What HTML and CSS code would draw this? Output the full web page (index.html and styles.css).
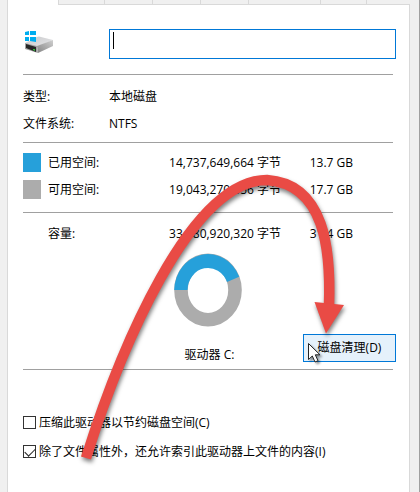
FILE: index.html
```html
<!DOCTYPE html>
<html lang="zh-CN">
<head>
    <meta charset="UTF-8">
    <meta name="viewport" content="width=device-width, initial-scale=1.0">
    <title>驱动器 C:</title>
    <link rel="stylesheet" href="styles.css">
</head>
<body>
    <div class="dialog">
        <div class="tabs">
            <span class="tab selected"></span>
            <span class="tab"></span>
            <span class="tab wide"></span>
            <span class="tab wide"></span>
            <span class="tab wide"></span>
            <span class="tab widest"></span>
            <span class="tab"></span>
            <span class="tab rest"></span>
        </div>

        <main class="panel">
            <div class="drive-name">
                <svg class="drive-icon" width="32" height="24" viewBox="0 0 32 24">
                    <defs>
                        <linearGradient id="driveTop" x1="0" y1="0" x2="1" y2="1">
                            <stop offset="0" stop-color="#c9cacc"/>
                            <stop offset="1" stop-color="#e6e6e8"/>
                        </linearGradient>
                        <linearGradient id="driveSide" x1="0" y1="1" x2="1" y2="0">
                            <stop offset="0" stop-color="#858585"/>
                            <stop offset="1" stop-color="#cfcfcf"/>
                        </linearGradient>
                    </defs>
                    <path d="M2 14 L14 8 Q16 7 18 8 L30 11 L14 18 Z" fill="url(#driveTop)"/>
                    <path d="M14 17 L30 11 L30 17 L15 24 Z" fill="url(#driveSide)"/>
                    <path d="M2 14 L14 17 L15 24 L2 20 Z" fill="#a2a2a2"/>
                    <path d="M3 15 L13 18 L13 23 L3 19 Z" fill="#262626"/>
                    <path d="M10 20 L12 20 L12 22 L10 21 Z" fill="#2fc238"/>
                    <path d="M2 3 L6 2 V6 H2 Z M7 2 L13 2 V6 H7 Z M2 8 H6 V12 L2 12 Z M7 8 H13 V13 L7 12 Z" fill="#00adef"/>
                </svg>
                <input type="text" class="name-input" id="volumeName" aria-labelledby="driveLabel" autofocus>
                <span class="caret"></span>
            </div>
            <hr>

            <table class="details">
                <tr>
                    <th scope="row">类型:</th>
                    <td>本地磁盘</td>
                </tr>
                <tr>
                    <th scope="row">文件系统:</th>
                    <td>NTFS</td>
                </tr>
            </table>
            <hr>

            <table class="space usage">
                <tr>
                    <td class="key"><span class="swatch used"></span></td>
                    <th scope="row">已用空间:</th>
                    <td class="bytes">14,737,649,664 字节</td>
                    <td class="size">13.7 GB</td>
                </tr>
                <tr>
                    <td class="key"><span class="swatch free"></span></td>
                    <th scope="row">可用空间:</th>
                    <td class="bytes">19,043,270,656 字节</td>
                    <td class="size">17.7 GB</td>
                </tr>
            </table>
            <hr>

            <table class="space capacity">
                <tr>
                    <td class="key"></td>
                    <th scope="row">容量:</th>
                    <td class="bytes">33,780,920,320 字节</td>
                    <td class="size">31.4 GB</td>
                </tr>
            </table>

            <div class="chart">
                <svg width="68" height="74" viewBox="0 0 68 74">
                    <ellipse cx="34" cy="37" rx="27" ry="29.7" fill="none" stroke="#acacac" stroke-width="13.6"/>
                    <path d="M0.2 37 A33.8 36.8 0 0 1 65.2 23.8 L53 29 A20.5 22.5 0 0 0 13.5 37 Z" fill="#26a0da"/>
                </svg>
            </div>

            <div class="drive-row">
                <span class="drive-label" id="driveLabel">驱动器 C:</span>
                <button type="button" class="cleanup">磁盘清理(D)</button>
            </div>
            <hr>

            <div class="options">
                <label class="option">
                    <input type="checkbox">
                    <span>压缩此驱动器以节约磁盘空间(C)</span>
                </label>
                <label class="option">
                    <input type="checkbox" checked>
                    <span>除了文件属性外，还允许索引此驱动器上文件的内容(I)</span>
                </label>
            </div>
        </main>

        <!-- Arrow pointing at the cleanup button, and the mouse pointer -->
        <svg class="pointer-overlay" width="420" height="492" viewBox="0 0 420 492">
            <g class="arrow">
                <path d="M86 458 C120 350 190 180 267 180 C325 184 331 250 329 306" fill="none" stroke="#e94b45" stroke-width="10.5"/>
                <path d="M314.5 302 L344 305 L326 333.5 Z" fill="#e94b45"/>
            </g>
            <path class="cursor" d="M308.5 343.5 V359.5 L312.3 356 L315 362 L318 360.7 L315.3 354.8 H320 Z" fill="#fff" stroke="#222" stroke-width="1"/>
        </svg>
    </div>
</body>
</html>
```
FILE: styles.css
```css
* {
    box-sizing: border-box;
}

body {
    margin: 0;
    font-family: "Open Sans", "Noto Sans CJK SC", sans-serif;
    font-size: 12px;
    line-height: 18px;
    color: #000;
    background-color: #f0f0f0;
}

.dialog {
    position: relative;
    display: flex;
    flex-direction: column;
    min-height: 100vh;
    padding: 0 9px 0 7px;
    border-right: 1px solid #a0a0a0;
}

/* Tab strip */
.tabs {
    display: flex;
    height: 5px;
}

.tab {
    width: 46px;
    border-left: 1px solid #d9d9d9;
    border-bottom: 1px solid #d9d9d9;
}

.tab.selected {
    width: 51px;
    background: #fff;
    border-bottom: none;
}

.tab.wide {
    width: 48px;
}

.tab.widest {
    width: 72px;
}

.tab.rest {
    flex: 1;
}

.panel {
    flex: 1;
    padding: 24px 13px 20px 15px;
    background: #fff;
    border: solid #d9d9d9;
    border-width: 0 1px;
}

hr {
    height: 1px;
    margin: 0 3px 0 0;
    border: none;
    background: #a0a0a0;
}

/* Drive icon and name */
.drive-name {
    position: relative;
    display: flex;
    margin-bottom: 15px;
}

.drive-icon {
    flex: none;
    margin-right: 54px;
}

.name-input {
    flex: 1;
    min-width: 0;
    height: 30px;
    padding: 2px 4px;
    border: 1px solid #0078d7;
    border-radius: 0;
    outline: none;
    font: inherit;
    caret-color: transparent;
}

.caret {
    position: absolute;
    left: 90px;
    top: 3px;
    width: 1px;
    height: 17px;
    background: #000;
}

/* Tables */
table {
    border-collapse: collapse;
    table-layout: fixed;
}

tr {
    height: 27px;
}

th, td {
    padding: 0;
    font-weight: normal;
    text-align: left;
    white-space: nowrap;
}

.details {
    margin: 8px 0 5px;
}

.details th {
    width: 86px;
}

.usage {
    margin: 6px 0 9px;
}

.capacity {
    margin: 7px 0 6px;
}

.space .key {
    width: 25px;
}

.space th {
    width: 93px;
}

.space .bytes {
    width: 140px;
    text-align: right;
}

.space .size {
    width: 72px;
    text-align: right;
}

.swatch {
    display: block;
    width: 18px;
    height: 19px;
}

.used {
    background: #26a0da;
}

.free {
    background: #acacac;
}

/* Chart and cleanup button */
.chart {
    display: flex;
    justify-content: center;
    margin: 0 3px 7px 0;
}

.drive-row {
    display: grid;
    grid-template-columns: 1fr auto 1fr;
    margin-bottom: 7px;
}

.drive-label {
    grid-column: 2;
    align-self: end;
    line-height: 14px;
}

.cleanup {
    justify-self: end;
    width: 93px;
    height: 28px;
    padding: 0;
    border: 1px solid #0078d7;
    background: #e5f1fb;
    font: inherit;
    color: #000;
}

/* Check boxes */
.options {
    margin-top: 38px;
}

.option {
    display: flex;
    align-items: center;
    gap: 3px;
    height: 29px;
    white-space: nowrap;
}

.option input {
    appearance: none;
    flex: none;
    width: 13px;
    height: 13px;
    margin: 0;
    border: 1px solid #333;
    background: #fff;
}

.option input:checked::before {
    content: "";
    display: block;
    width: 9px;
    height: 5px;
    margin: 2px 0 0 1px;
    border-left: 1px solid #222;
    border-bottom: 1px solid #222;
    transform: rotate(-45deg);
}

/* Arrow overlay */
.pointer-overlay {
    position: absolute;
    left: 0;
    top: 0;
    pointer-events: none;
}

.arrow {
    filter: drop-shadow(1px 3px 2px rgba(0, 0, 0, 0.5));
}

.cursor {
    filter: drop-shadow(2px 2px 1px rgba(0, 0, 0, 0.4));
}
```
